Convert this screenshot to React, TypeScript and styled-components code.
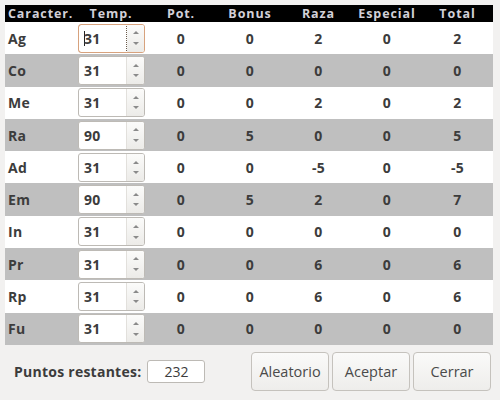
import React from 'react';
import styled, { createGlobalStyle, css } from 'styled-components';

const GlobalStyle = createGlobalStyle`
  html, body {
    margin: 0;
    padding: 0;
    background: #f2f1f0;
    font-family: 'Open Sans', 'DejaVu Sans', sans-serif;
    color: #3c3c3c;
  }
`;

const Window = styled.div`
  width: 500px;
  height: 400px;
  box-sizing: border-box;
  padding: 5px 7px 0 5px;
  display: flex;
  flex-direction: column;
`;

const Table = styled.div`
  display: grid;
  grid-template-columns: 70px 72px 68px 70px 67px 70px 71px;
  grid-template-rows: 17px repeat(10, 32.3px);
`;

const HeadCell = styled.div<{ $left?: boolean }>`
  background: #000;
  color: #d2d0d8;
  font-weight: 700;
  font-size: 12.5px;
  letter-spacing: 0.9px;
  line-height: 17px;
  text-align: ${(p) => (p.$left ? 'left' : 'center')};
  padding-left: ${(p) => (p.$left ? '3px' : '0')};
  white-space: nowrap;
`;

const Cell = styled.div<{ $alt: boolean; $left?: boolean }>`
  background: ${(p) => (p.$alt ? '#bfbfbf' : '#ffffff')};
  display: flex;
  align-items: center;
  justify-content: ${(p) => (p.$left ? 'flex-start' : 'center')};
  padding-left: ${(p) => (p.$left ? '3px' : '0')};
  font-weight: 700;
  font-size: 14px;
  letter-spacing: 0.3px;
  color: #3c3c3c;
`;

const SpinCell = styled(Cell)`
  justify-content: flex-start;
  padding-left: 3px;
`;

const SpinBox = styled.div<{ $focus?: boolean }>`
  width: 67px;
  height: 29px;
  box-sizing: border-box;
  display: flex;
  border: 1px solid #bdbab5;
  border-radius: 3px;
  background: #fff;
  overflow: hidden;
  ${(p) =>
    p.$focus &&
    css`
      border-color: #d7a27d;
    `}
`;

const SpinText = styled.div<{ $focus?: boolean }>`
  flex: 1;
  display: flex;
  align-items: center;
  padding-left: 5px;
  font-weight: 700;
  font-size: 14px;
  letter-spacing: 0.3px;
  color: #3c3c3c;
  border: ${(p) => (p.$focus ? '1px solid #c8865c' : 'none')};
  border-right: 1px ${(p) => (p.$focus ? 'dotted #6a5a4a' : 'solid #e2e0dc')};
  margin: ${(p) => (p.$focus ? '-1px 0 -1px -1px' : '0')};
  border-radius: ${(p) => (p.$focus ? '3px 0 0 3px' : '0')};
`;

const Caret = styled.span`
  display: inline-block;
  width: 1px;
  height: 15px;
  background: #222;
  margin-right: -1px;
`;

const Spinner = styled.div`
  width: 17px;
  display: flex;
  flex-direction: column;
  align-items: center;
  justify-content: space-around;
  background: linear-gradient(#fbfbfa, #ecebe8);
  padding: 3px 0;
`;

const Arrow = styled.div<{ $down?: boolean }>`
  width: 0;
  height: 0;
  border-left: 3px solid transparent;
  border-right: 3px solid transparent;
  ${(p) =>
    p.$down
      ? css`border-top: 3px solid #8a8a8a;`
      : css`border-bottom: 3px solid #8a8a8a;`}
`;

const Footer = styled.div`
  flex: 1;
  display: flex;
  align-items: center;
  padding-left: 9px;
  padding-bottom: 2px;
`;

const Label = styled.span`
  font-weight: 700;
  font-size: 14px;
  letter-spacing: 0.25px;
  color: #3c3c3c;
  margin-right: 6px;
`;

const Points = styled.div`
  width: 58px;
  height: 23px;
  box-sizing: border-box;
  border: 1px solid #bdbab5;
  border-radius: 3px;
  background: #fff;
  font-size: 14px;
  line-height: 21px;
  text-align: center;
  color: #3c3c3c;
`;

const Buttons = styled.div`
  margin-left: auto;
  margin-right: 2px;
  display: flex;
  gap: 3px;
`;

const Button = styled.button`
  width: 78px;
  height: 39px;
  border: 1px solid #c5c2bd;
  border-radius: 4px;
  background: linear-gradient(#fafaf9, #eeedeb);
  font-family: inherit;
  font-size: 14.5px;
  color: #4a4a4a;
  padding: 0;
`;

const headers = ['Pot.', 'Bonus', 'Raza', 'Especial', 'Total'];

const rows: [string, number, number[]][] = [
  ['Ag', 31, [0, 0, 2, 0, 2]],
  ['Co', 31, [0, 0, 0, 0, 0]],
  ['Me', 31, [0, 0, 2, 0, 2]],
  ['Ra', 90, [0, 5, 0, 0, 5]],
  ['Ad', 31, [0, 0, -5, 0, -5]],
  ['Em', 90, [0, 5, 2, 0, 7]],
  ['In', 31, [0, 0, 0, 0, 0]],
  ['Pr', 31, [0, 0, 6, 0, 6]],
  ['Rp', 31, [0, 0, 6, 0, 6]],
  ['Fu', 31, [0, 0, 0, 0, 0]],
];

const App = () => (
  <>
    <GlobalStyle />
    <Window>
      <Table>
        <HeadCell $left>Caracter.</HeadCell>
        <HeadCell>Temp.</HeadCell>
        {headers.map((h) => (
          <HeadCell key={h}>{h}</HeadCell>
        ))}
        {rows.map(([name, temp, vals], i) => {
          const alt = i % 2 === 1;
          const focus = i === 0;
          return (
            <React.Fragment key={name}>
              <Cell $alt={alt} $left>
                {name}
              </Cell>
              <SpinCell $alt={alt}>
                <SpinBox $focus={focus}>
                  <SpinText $focus={focus}>
                    {focus && <Caret />}
                    {temp}
                  </SpinText>
                  <Spinner>
                    <Arrow />
                    <Arrow $down />
                  </Spinner>
                </SpinBox>
              </SpinCell>
              {vals.map((v, j) => (
                <Cell key={j} $alt={alt}>
                  {v}
                </Cell>
              ))}
            </React.Fragment>
          );
        })}
      </Table>
      <Footer>
        <Label>Puntos restantes:</Label>
        <Points>232</Points>
        <Buttons>
          <Button>Aleatorio</Button>
          <Button>Aceptar</Button>
          <Button>Cerrar</Button>
        </Buttons>
      </Footer>
    </Window>
  </>
);

export default App;
